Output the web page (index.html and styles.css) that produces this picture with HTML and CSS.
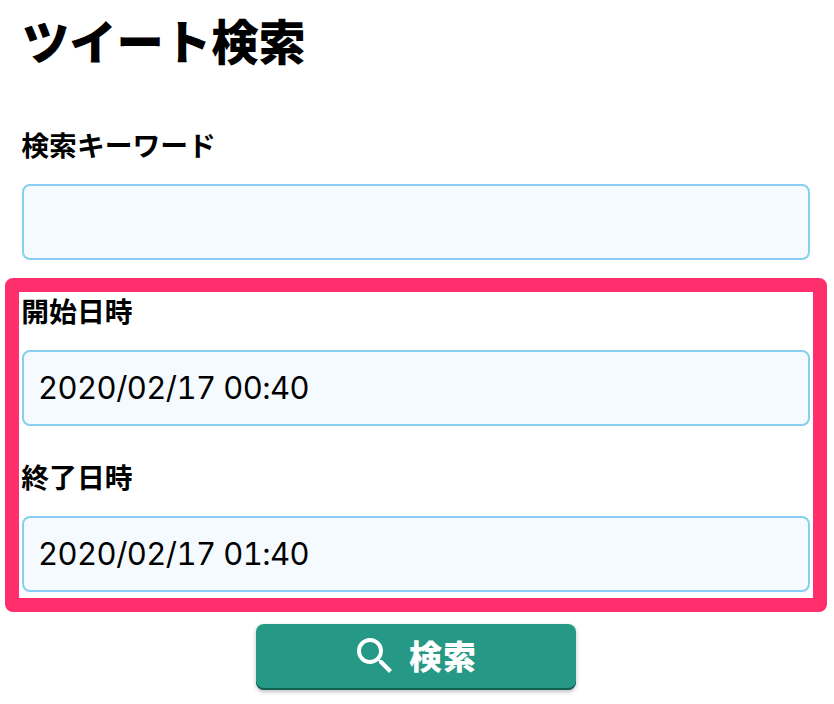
FILE: index.html
```html
<!DOCTYPE html>
<html lang="ja">
<head>
<meta charset="utf-8">
<title>ツイート検索</title>
<link rel="stylesheet" href="styles.css">
</head>
<body>
<main class="page">
  <h1 class="title">ツイート検索</h1>
  <form class="form">
    <div class="field">
      <label class="label" for="keyword">検索キーワード</label>
      <input class="input" id="keyword" type="text">
    </div>
    <div class="field">
      <label class="label" for="start">開始日時</label>
      <input class="input" id="start" type="text" value="2020/02/17 00:40">
    </div>
    <div class="field">
      <label class="label" for="end">終了日時</label>
      <input class="input" id="end" type="text" value="2020/02/17 01:40">
    </div>
    <button class="submit" type="button">
      <svg class="icon" viewBox="3 3 17.49 17.49"><path fill="currentColor" d="M15.5 14h-.79l-.28-.27A6.471 6.471 0 0 0 16 9.5 6.5 6.5 0 1 0 9.5 16c1.61 0 3.09-.59 4.23-1.57l.27.28v.79l5 4.99L20.49 19l-4.99-5zm-6 0C7.01 14 5 11.99 5 9.5S7.01 5 9.5 5 14 7.01 14 9.5 11.99 14 9.5 14z"/></svg>
      <span class="submit-text">検索</span>
    </button>
  </form>
  <div class="highlight"></div>
</main>
</body>
</html>
```
FILE: styles.css
```css
* { box-sizing: border-box; }
body {
  margin: 0;
  background: #fff;
  color: #000;
  font-family: "Noto Sans CJK JP", sans-serif;
}
.page {
  position: relative;
  height: 704px;
  padding: 5px 24px 0 22px;
  overflow: hidden;
}
.title {
  margin: 0;
  height: 70px;
  font-size: 47.3px;
  line-height: 70px;
  font-weight: 900;
}
.form {
  display: flex;
  flex-direction: column;
  padding-top: 48px;
}
.field { height: 166px; }
.label {
  display: block;
  height: 61px;
  margin-left: -0.7px;
  font-size: 27.8px;
  line-height: 42px;
  font-weight: 700;
}
.input {
  display: block;
  width: 100%;
  height: 76px;
  padding: 0 14px 2px;
  border: 2px solid #87cef0;
  border-radius: 8px;
  background: #f5faff;
  color: #000;
  font: 400 31px Inter, "Noto Sans CJK JP", sans-serif;
  font-variant-numeric: tabular-nums;
  letter-spacing: -0.57px;
}
.submit {
  display: flex;
  align-items: center;
  justify-content: center;
  gap: 17px;
  width: 320px;
  height: 66px;
  margin: 3px 0 0 234px;
  padding: 0 0 3px 2px;
  border: 0;
  border-radius: 8px;
  background: #259985;
  box-shadow: inset 0 -2px #146152, 0 2px 4px rgba(0, 0, 0, .25);
  color: #fff;
  font: 900 33px "Noto Sans CJK JP", sans-serif;
  letter-spacing: 1px;
}
.submit-text { padding-bottom: 2px; }
.icon { width: 35px; height: 35px; }
.highlight {
  position: absolute;
  left: 4.7px;
  top: 278.3px;
  width: 822.3px;
  height: 333.7px;
  border: 14px solid #ff2f6e;
  border-radius: 8px;
  pointer-events: none;
}
```
